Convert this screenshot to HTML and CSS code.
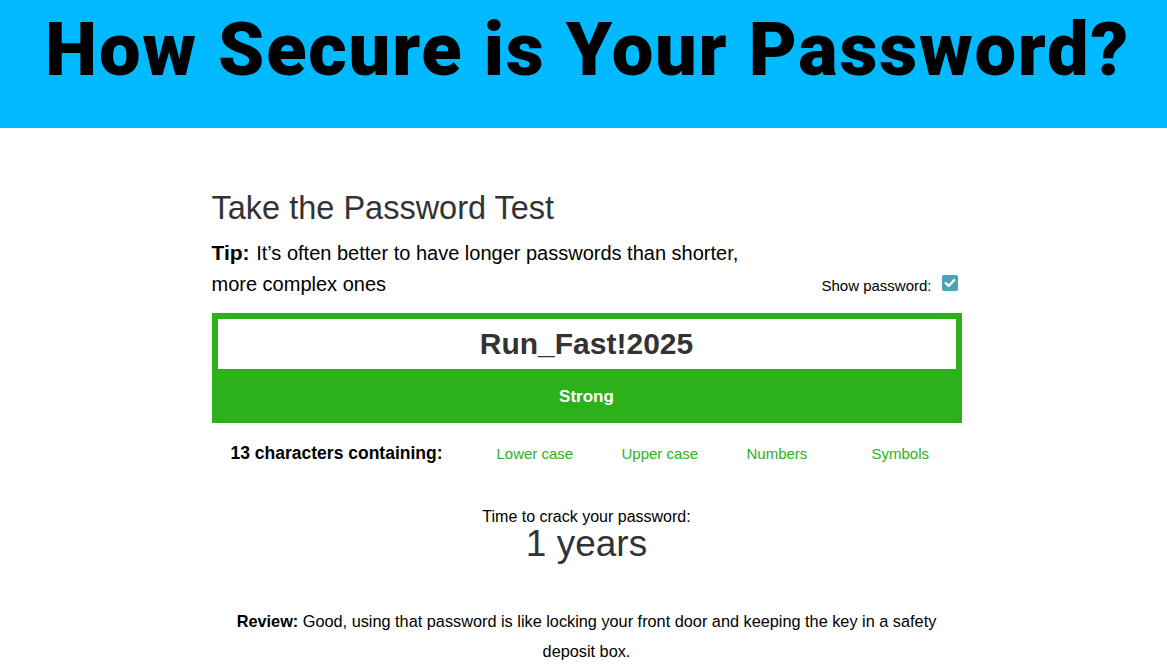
FILE: index.html
```html
<!DOCTYPE html>
<html>
<head>
<meta charset="utf-8">
<link rel="stylesheet" href="styles.css">
</head>
<body>
<header class="banner">
  <h1 class="banner-title">How Secure is Your Password?</h1>
</header>
<main class="test">
  <h2 class="test-title">Take the Password Test</h2>
  <div class="tip-row">
    <p class="tip"><strong class="tip-label">Tip:</strong> It’s often better to have longer passwords than shorter, more complex ones</p>
    <label class="show">Show password: <span class="check"><svg viewBox="0 0 16 16" width="16" height="16"><rect width="16" height="16" rx="2" fill="#4aa3b4"/><path d="M3.8 8.2 L6.7 11 L12.2 5" fill="none" stroke="#fff" stroke-width="2.4" stroke-linecap="round" stroke-linejoin="round"/></svg></span></label>
  </div>
  <div class="meter">
    <div class="pw">Run_Fast!2025</div>
    <div class="strength">Strong</div>
  </div>
  <div class="contains">
    <span class="count">13 characters containing:</span>
    <span class="item">Lower case</span>
    <span class="item">Upper case</span>
    <span class="item">Numbers</span>
    <span class="item">Symbols</span>
  </div>
  <div class="crack">
    <div class="crack-label">Time to crack your password:</div>
    <div class="crack-value">1 years</div>
  </div>
  <p class="review"><strong>Review:</strong> Good, using that password is like locking your front door and keeping the key in a safety deposit box.</p>
</main>
</body>
</html>
```
FILE: styles.css
```css
html, body { margin: 0; padding: 0; background: #fff; }
body { font-family: "Liberation Sans", Arial, sans-serif; color: #000; overflow: hidden; }
.banner {
  background: #00b9ff;
  height: 128px;
  display: flex;
  align-items: flex-start;
  justify-content: center;
  padding-left: 8px;
  box-sizing: border-box;
}
.banner-title {
  margin: 0;
  padding-top: 8px;
  font-family: "Roboto", "Liberation Sans", sans-serif;
  font-weight: 900;
  font-size: 74px;
  line-height: 84px;
  letter-spacing: 1.8px;
  color: #000;
  white-space: nowrap;
}
.test { width: 750px; margin-left: calc(50% - 372px); padding-top: 56px; }
.test-title {
  margin: 0 0 6px;
  font-weight: 400;
  font-size: 32.5px;
  line-height: 48px;
  color: #333;
}
.tip-row { display: flex; justify-content: space-between; align-items: flex-end; }
.tip { margin: 0; width: 540px; font-size: 20px; line-height: 31px; color: #000; }
.tip-label { display: inline-block; font-size: 21px; line-height: 24px; margin-right: 1px; }
.show { font-size: 15px; color: #000; display: flex; align-items: center; gap: 10px; padding-right: 4px; padding-bottom: 6px; }
.check { display: inline-flex; position: relative; top: -3px; }
.meter { margin-top: 13px; background: #2cb11a; padding: 6px 6px 0 6px; }
.pw {
  background: #fff;
  height: 50px;
  line-height: 50px;
  text-align: center;
  font-weight: 700;
  font-size: 30px;
  color: #333;
}
.strength { height: 54px; line-height: 56px; text-align: center; color: #fff; font-weight: 700; font-size: 17px; }
.contains { display: flex; align-items: baseline; padding-top: 20px; }
.count { flex-shrink: 0; font-weight: 700; font-size: 17.5px; width: 266px; padding-left: 19px; }
.item { flex-shrink: 0; width: 125px; font-size: 15px; color: #2cb11a; }
.item:last-child { width: 90px; }
.crack { text-align: center; margin-top: 45px; }
.crack-label { font-size: 16px; line-height: 16px; }
.crack-value { font-size: 37px; line-height: 37px; color: #333; }
.review { text-align: center; margin: 44px 20px 0; font-size: 16.3px; line-height: 30px; }
```
